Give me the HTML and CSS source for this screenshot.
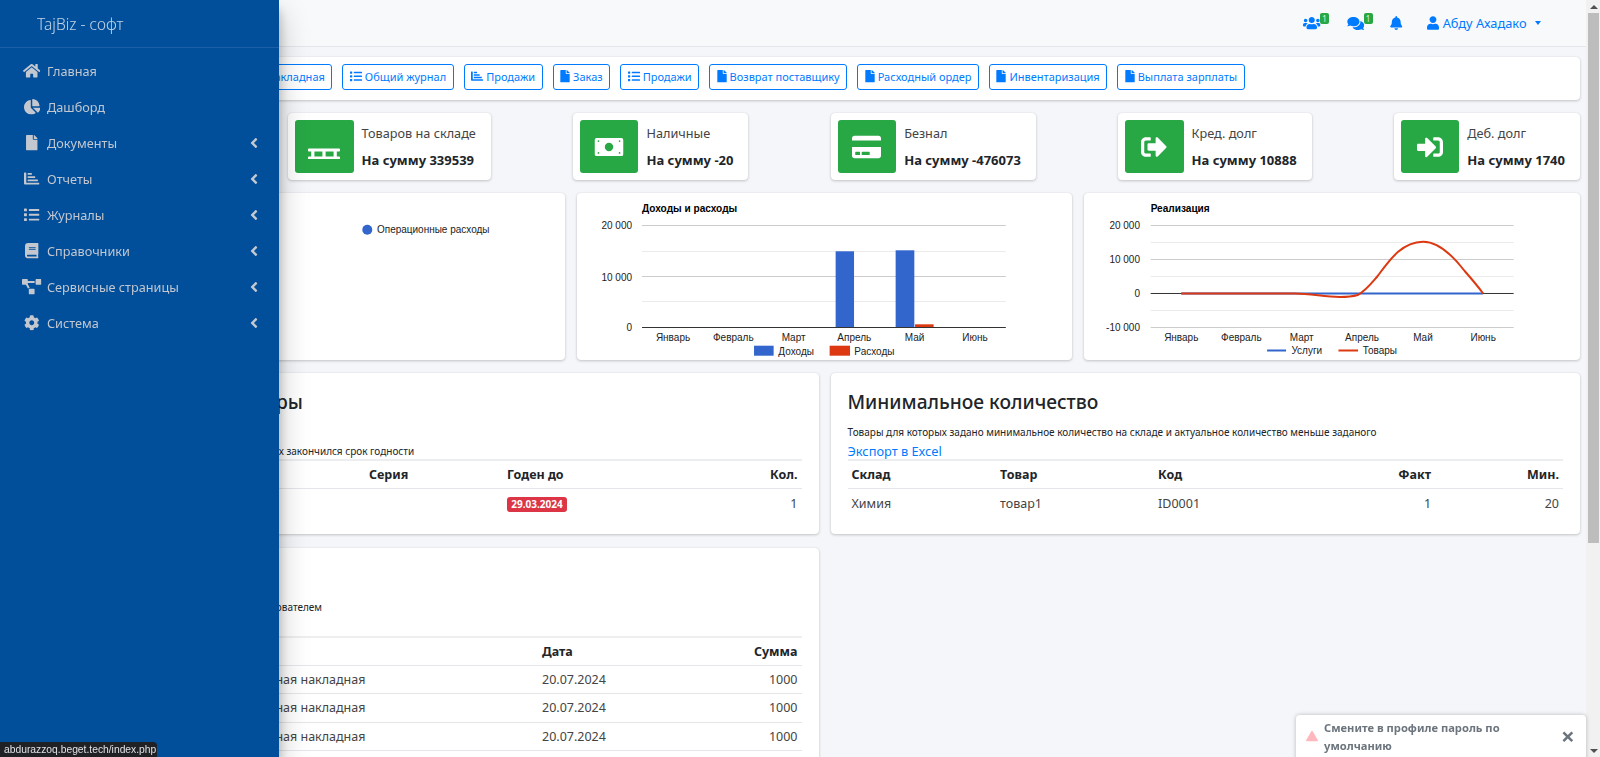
FILE: index.html
```html
<!DOCTYPE html>
<html lang="ru">
<head>
<meta charset="utf-8">
<title>TajBiz - софт</title>
<link rel="stylesheet" href="styles.css">
</head>
<body>
<svg class="sprite" xmlns="http://www.w3.org/2000/svg">
  <symbol id="i-home" viewBox="0 0 576 512"><path d="M280.37 148.26L96 300.11V464a16 16 0 0 0 16 16l112.06-.29a16 16 0 0 0 15.92-16V368a16 16 0 0 1 16-16h64a16 16 0 0 1 16 16v95.64a16 16 0 0 0 16 16.05L464 480a16 16 0 0 0 16-16V300L295.67 148.26a12.19 12.19 0 0 0-15.3 0zM571.6 251.47L488 182.56V44.05a12 12 0 0 0-12-12h-56a12 12 0 0 0-12 12v72.61L318.47 43a48 48 0 0 0-61 0L4.34 251.47a12 12 0 0 0-1.6 16.9l25.5 31A12 12 0 0 0 45.15 301l235.22-193.74a12.19 12.19 0 0 1 15.3 0L530.9 301a12 12 0 0 0 16.9-1.6l25.5-31a12 12 0 0 0-1.7-16.93z"/></symbol>
  <symbol id="i-pie" viewBox="0 0 544 512"><path d="M527.79 288H290.5l158.03 158.03c6.04 6.04 15.98 6.53 22.19.68 38.7-36.46 65.32-85.61 73.13-140.86 1.34-9.46-6.51-17.85-16.06-17.85zm-15.83-64.8C503.72 103.74 408.26 8.28 288.8.04 279.68-.59 272 7.1 272 16.24V240h223.77c9.14 0 16.82-7.68 16.19-16.8zM224 288V50.71c0-9.55-8.39-17.4-17.84-16.06C86.99 51.49-4.1 155.6.14 280.37 4.5 408.51 114.83 513.59 243.03 511.98c50.4-.63 96.97-16.87 135.26-44.03 7.9-5.6 8.42-17.23 1.57-24.08L224 288z"/></symbol>
  <symbol id="i-file" viewBox="0 0 384 512"><path d="M224 136V0H24C10.7 0 0 10.7 0 24v464c0 13.3 10.7 24 24 24h336c13.3 0 24-10.7 24-24V160H248c-13.2 0-24-10.8-24-24zm160-14.1v6.1H256V0h6.1c6.4 0 12.5 2.5 17 7l97.9 98c4.5 4.5 7 10.6 7 16.9z"/></symbol>
  <symbol id="i-chart" viewBox="0 0 512 512"><path d="M16 48h44a16 16 0 0 1 16 16v320h420a16 16 0 0 1 16 16v32a16 16 0 0 1-16 16H32a32 32 0 0 1-32-32V64a16 16 0 0 1 16-16z"/><rect x="120" y="64" width="140" height="60" rx="12"/><rect x="120" y="172" width="250" height="60" rx="12"/><rect x="120" y="280" width="340" height="60" rx="12"/></symbol>
  <symbol id="i-list" viewBox="0 0 512 512"><path d="M80 368H16a16 16 0 0 0-16 16v64a16 16 0 0 0 16 16h64a16 16 0 0 0 16-16v-64a16 16 0 0 0-16-16zm0-320H16A16 16 0 0 0 0 64v64a16 16 0 0 0 16 16h64a16 16 0 0 0 16-16V64a16 16 0 0 0-16-16zm0 160H16a16 16 0 0 0-16 16v64a16 16 0 0 0 16 16h64a16 16 0 0 0 16-16v-64a16 16 0 0 0-16-16zm416 176H176a16 16 0 0 0-16 16v32a16 16 0 0 0 16 16h320a16 16 0 0 0 16-16v-32a16 16 0 0 0-16-16zm0-320H176a16 16 0 0 0-16 16v32a16 16 0 0 0 16 16h320a16 16 0 0 0 16-16V80a16 16 0 0 0-16-16zm0 160H176a16 16 0 0 0-16 16v32a16 16 0 0 0 16 16h320a16 16 0 0 0 16-16v-32a16 16 0 0 0-16-16z"/></symbol>
  <symbol id="i-book" viewBox="0 0 448 512"><path d="M448 360V24c0-13.3-10.7-24-24-24H96C43 0 0 43 0 96v320c0 53 43 96 96 96h328c13.3 0 24-10.7 24-24v-16c0-7.5-3.5-14.3-8.9-18.7-4.2-15.4-4.2-59.3 0-74.7 5.4-4.3 8.9-11.1 8.9-18.6zM128 134c0-3.3 2.7-6 6-6h212c3.3 0 6 2.7 6 6v20c0 3.3-2.7 6-6 6H134c-3.3 0-6-2.7-6-6v-20zm0 64c0-3.3 2.7-6 6-6h212c3.3 0 6 2.7 6 6v20c0 3.3-2.7 6-6 6H134c-3.3 0-6-2.7-6-6v-20zm253.4 250H96c-17.7 0-32-14.3-32-32 0-17.6 14.4-32 32-32h285.4c-1.9 17.1-1.9 46.9 0 64z"/></symbol>
  <symbol id="i-diagram" viewBox="0 0 640 512"><path d="M384 320H256c-17.67 0-32 14.33-32 32v128c0 17.67 14.33 32 32 32h128c17.67 0 32-14.33 32-32V352c0-17.67-14.33-32-32-32zM192 32c0-17.67-14.33-32-32-32H32C14.33 0 0 14.33 0 32v128c0 17.67 14.33 32 32 32h95.72l73.16 128.04C211.98 300.98 232.4 288 256 288h.28L192 175.51V128h224V64H192V32zM608 0H480c-17.67 0-32 14.33-32 32v128c0 17.67 14.33 32 32 32h128c17.67 0 32-14.33 32-32V32c0-17.67-14.33-32-32-32z"/></symbol>
  <symbol id="i-cog" viewBox="0 0 512 512"><path d="M487.4 315.7l-42.6-24.6c4.3-23.2 4.3-47 0-70.2l42.6-24.6c4.9-2.8 7.1-8.6 5.5-14-11.1-35.6-30-67.8-54.7-94.6-3.8-4.1-10-5.1-14.8-2.3L380.8 110c-17.9-15.4-38.5-27.3-60.8-35.1V25.8c0-5.6-3.9-10.5-9.4-11.7-36.7-8.2-74.3-7.8-109.2 0-5.5 1.2-9.4 6.1-9.4 11.7V75c-22.2 7.9-42.8 19.8-60.8 35.1L88.7 85.5c-4.9-2.8-11-1.9-14.8 2.3-24.7 26.7-43.6 58.9-54.7 94.6-1.7 5.4.6 11.2 5.5 14L67.3 221c-4.3 23.2-4.3 47 0 70.2l-42.6 24.6c-4.9 2.8-7.1 8.6-5.5 14 11.1 35.6 30 67.8 54.7 94.6 3.8 4.1 10 5.1 14.8 2.3l42.6-24.6c17.9 15.4 38.5 27.3 60.8 35.1v49.2c0 5.6 3.9 10.5 9.4 11.7 36.7 8.2 74.3 7.8 109.2 0 5.5-1.2 9.4-6.1 9.4-11.7v-49.2c22.2-7.9 42.8-19.8 60.8-35.1l42.6 24.6c4.9 2.8 11 1.9 14.8-2.3 24.7-26.7 43.6-58.9 54.7-94.6 1.5-5.5-.7-11.3-5.6-14.1zM256 336c-44.1 0-80-35.9-80-80s35.9-80 80-80 80 35.9 80 80-35.9 80-80 80z"/></symbol>
  <symbol id="i-angle" viewBox="0 0 256 512"><path d="M31.7 239l136-136c9.4-9.4 24.6-9.4 33.9 0l22.6 22.6c9.4 9.4 9.4 24.6 0 33.9L127.9 256l96.4 96.4c9.4 9.4 9.4 24.6 0 33.9L201.7 409c-9.4 9.4-24.6 9.4-33.9 0l-136-136c-9.5-9.4-9.5-24.6-.1-34z"/></symbol>
  <symbol id="i-users" viewBox="0 0 640 512"><path d="M96 224c35.3 0 64-28.7 64-64s-28.7-64-64-64-64 28.7-64 64 28.7 64 64 64zm448 0c35.3 0 64-28.7 64-64s-28.7-64-64-64-64 28.7-64 64 28.7 64 64 64zm32 32h-64c-17.6 0-33.5 7.1-45.1 18.6 40.3 22.1 68.9 62 75.1 109.4h66c17.7 0 32-14.3 32-32v-32c0-35.3-28.7-64-64-64zm-256 0c61.9 0 112-50.1 112-112S381.9 32 320 32 208 82.1 208 144s50.1 112 112 112zm76.8 32h-8.3c-20.8 10-43.9 16-68.5 16s-47.6-6-68.5-16h-8.3C179.6 288 128 339.6 128 403.2V432c0 26.5 21.5 48 48 48h288c26.5 0 48-21.5 48-48v-28.8c0-63.6-51.6-115.2-115.2-115.2zm-223.7-13.4C161.5 263.1 145.6 256 128 256H64c-35.3 0-64 28.7-64 64v32c0 17.7 14.3 32 32 32h65.9c6.3-47.4 34.9-87.3 75.2-109.4z"/></symbol>
  <symbol id="i-comments" viewBox="0 0 576 512"><path d="M416 192c0-88.4-93.1-160-208-160S0 103.6 0 192c0 34.3 14.1 65.9 38 92-13.4 30.2-35.5 54.2-35.8 54.5-2.2 2.3-2.8 5.7-1.5 8.7S4.8 352 8 352c36.6 0 66.9-12.3 88.7-25 32.2 15.7 70.3 25 111.3 25 114.9 0 208-71.6 208-160zm122 220c23.9-26 38-57.7 38-92 0-66.9-53.5-124.2-129.3-148.1.9 6.6 1.3 13.3 1.3 20.1 0 105.9-107.7 192-240 192-10.8 0-21.3-.8-31.7-1.9C207.8 439.6 281.8 480 368 480c41 0 79.1-9.2 111.3-25 21.8 12.7 52.1 25 88.7 25 3.2 0 6.1-1.9 7.3-4.8 1.3-2.9.7-6.3-1.5-8.7-.3-.3-22.4-24.2-35.8-54.5z"/></symbol>
  <symbol id="i-bell" viewBox="0 0 448 512"><path d="M224 512c35.32 0 63.97-28.65 63.97-64H160.03c0 35.35 28.65 64 63.97 64zm215.39-149.71c-19.32-20.76-55.47-51.99-55.47-154.29 0-77.7-54.48-139.9-127.94-155.16V32c0-17.67-14.32-32-31.98-32s-31.98 14.33-31.98 32v20.84C118.56 68.1 64.08 130.3 64.08 208c0 102.3-36.15 133.53-55.47 154.29-6 6.45-8.66 14.16-8.61 21.71.11 16.4 12.98 32 32.1 32h383.8c19.12 0 32-15.6 32.1-32 .05-7.55-2.61-15.27-8.61-21.71z"/></symbol>
  <symbol id="i-user" viewBox="0 0 448 512"><path d="M224 256c70.7 0 128-57.3 128-128S294.7 0 224 0 96 57.3 96 128s57.3 128 128 128zm89.6 32h-16.7c-22.2 10.2-46.9 16-72.9 16s-50.6-5.8-72.9-16h-16.7C60.2 288 0 348.2 0 422.4V464c0 26.5 21.5 48 48 48h352c26.5 0 48-21.5 48-48v-41.6c0-74.2-60.2-134.4-134.4-134.4z"/></symbol>
  <symbol id="i-pallet" viewBox="0 0 640 512"><path d="M624 352c8.8 0 16-7.2 16-16v-32c0-8.8-7.2-16-16-16H16c-8.8 0-16 7.2-16 16v32c0 8.8 7.2 16 16 16h48v96H16c-8.8 0-16 7.2-16 16v32c0 8.8 7.2 16 16 16h608c8.8 0 16-7.2 16-16v-32c0-8.8-7.2-16-16-16h-48v-96h48zM288 448H128v-96h160v96zm224 0H352v-96h160v96z"/></symbol>
  <symbol id="i-money" viewBox="0 0 640 512"><path fill-rule="evenodd" d="M56 64h528a40 40 0 0 1 40 40v304a40 40 0 0 1-40 40H56a40 40 0 0 1-40-40V104a40 40 0 0 1 40-40zM320 166a90 90 0 1 0 0 180 90 90 0 1 0 0-180zM95 112a18 18 0 1 0 0 36 18 18 0 1 0 0-36zM545 112a18 18 0 1 0 0 36 18 18 0 1 0 0-36zM95 364a18 18 0 1 0 0 36 18 18 0 1 0 0-36zM545 364a18 18 0 1 0 0 36 18 18 0 1 0 0-36z"/></symbol>
  <symbol id="i-card" viewBox="0 0 576 512"><path d="M0 432c0 26.5 21.5 48 48 48h480c26.5 0 48-21.5 48-48V256H0v176zm192-68c0-6.6 5.4-12 12-12h136c6.6 0 12 5.4 12 12v40c0 6.6-5.4 12-12 12H204c-6.6 0-12-5.4-12-12v-40zm-128 0c0-6.6 5.4-12 12-12h72c6.6 0 12 5.4 12 12v40c0 6.6-5.4 12-12 12H76c-6.6 0-12-5.4-12-12v-40zM576 80v48H0V80c0-26.5 21.5-48 48-48h480c26.5 0 48 21.5 48 48z"/></symbol>
  <symbol id="i-out" viewBox="0 0 512 512"><path d="M497 273L329 441c-15 15-41 4.5-41-17v-96H152c-13.3 0-24-10.7-24-24v-96c0-13.3 10.7-24 24-24h136V88c0-21.4 25.9-32 41-17l168 168c9.3 9.4 9.3 24.6 0 34zM192 436v-40c0-6.6-5.4-12-12-12H96c-17.7 0-32-14.3-32-32V160c0-17.7 14.3-32 32-32h84c6.6 0 12-5.4 12-12V76c0-6.6-5.4-12-12-12H96c-53 0-96 43-96 96v192c0 53 43 96 96 96h84c6.6 0 12-5.4 12-12z"/></symbol>
  <symbol id="i-in" viewBox="0 0 512 512"><path d="M416 448h-84c-6.6 0-12-5.4-12-12v-40c0-6.6 5.4-12 12-12h84c17.7 0 32-14.3 32-32V160c0-17.7-14.3-32-32-32h-84c-6.6 0-12-5.4-12-12V76c0-6.6 5.4-12 12-12h84c53 0 96 43 96 96v192c0 53-43 96-96 96zm-47-201L201 79c-15-15-41-4.5-41 17v96H24c-13.3 0-24 10.7-24 24v96c0 13.3 10.7 24 24 24h136v96c0 21.5 26 32 41 17l168-168c9.3-9.4 9.3-24.6 0-34z"/></symbol>
  <symbol id="i-warn" viewBox="0 0 576 512"><path d="M569.517 440.013C587.975 472.007 564.806 512 527.94 512H48.054c-36.937 0-59.999-40.055-41.577-71.987L246.423 23.985c18.467-32.009 64.72-31.951 83.154 0z"/></symbol>
</svg>

<aside class="sidebar">
  <div class="brand">TajBiz - софт</div>
  <nav class="side-nav">
    <a class="side-item"><span class="side-icon"><svg class="ico w-home"><use href="#i-home"/></svg></span>Главная</a>
    <a class="side-item"><span class="side-icon"><svg class="ico w-pie"><use href="#i-pie"/></svg></span>Дашборд</a>
    <a class="side-item"><span class="side-icon"><svg class="ico w-file"><use href="#i-file"/></svg></span>Документы<svg class="ico side-arrow"><use href="#i-angle"/></svg></a>
    <a class="side-item"><span class="side-icon"><svg class="ico w-list"><use href="#i-chart"/></svg></span>Отчеты<svg class="ico side-arrow"><use href="#i-angle"/></svg></a>
    <a class="side-item"><span class="side-icon"><svg class="ico w-list"><use href="#i-list"/></svg></span>Журналы<svg class="ico side-arrow"><use href="#i-angle"/></svg></a>
    <a class="side-item"><span class="side-icon"><svg class="ico w-book"><use href="#i-book"/></svg></span>Справочники<svg class="ico side-arrow"><use href="#i-angle"/></svg></a>
    <a class="side-item"><span class="side-icon"><svg class="ico w-diagram"><use href="#i-diagram"/></svg></span>Сервисные страницы<svg class="ico side-arrow"><use href="#i-angle"/></svg></a>
    <a class="side-item"><span class="side-icon"><svg class="ico w-list"><use href="#i-cog"/></svg></span>Система<svg class="ico side-arrow"><use href="#i-angle"/></svg></a>
  </nav>
</aside>

<div class="page">
  <header class="navbar">
    <a class="nav-link nav-users"><svg class="ico"><use href="#i-users"/></svg><span class="nav-badge">1</span></a>
    <a class="nav-link nav-comments"><svg class="ico"><use href="#i-comments"/></svg><span class="nav-badge">1</span></a>
    <a class="nav-link nav-bell"><svg class="ico"><use href="#i-bell"/></svg></a>
    <a class="nav-link nav-user"><svg class="ico"><use href="#i-user"/></svg><span>Абду Ахадако</span><span class="caret"></span></a>
  </header>

  <main class="content">
    <section class="card actions">
      <a class="btn"><svg class="ico btn-ico"><use href="#i-file"/></svg>Приходная накладная</a>
      <a class="btn"><svg class="ico btn-ico wide"><use href="#i-list"/></svg>Общий журнал</a>
      <a class="btn"><svg class="ico btn-ico wide"><use href="#i-chart"/></svg>Продажи</a>
      <a class="btn"><svg class="ico btn-ico"><use href="#i-file"/></svg>Заказ</a>
      <a class="btn"><svg class="ico btn-ico wide"><use href="#i-list"/></svg>Продажи</a>
      <a class="btn"><svg class="ico btn-ico"><use href="#i-file"/></svg>Возврат поставщику</a>
      <a class="btn"><svg class="ico btn-ico"><use href="#i-file"/></svg>Расходный ордер</a>
      <a class="btn"><svg class="ico btn-ico"><use href="#i-file"/></svg>Инвентаризация</a>
      <a class="btn"><svg class="ico btn-ico"><use href="#i-file"/></svg>Выплата зарплаты</a>
    </section>

    <section class="info-row">
      <div class="card info"><span class="info-icon"><svg class="ico pallet"><use href="#i-pallet"/></svg></span><div class="info-text"><span class="info-label">Товаров на складе</span><span class="info-value">На сумму 339539</span></div></div>
      <div class="card info"><span class="info-icon"><svg class="ico money"><use href="#i-money"/></svg></span><div class="info-text"><span class="info-label">Наличные</span><span class="info-value">На сумму -20</span></div></div>
      <div class="card info"><span class="info-icon"><svg class="ico big"><use href="#i-card"/></svg></span><div class="info-text"><span class="info-label">Безнал</span><span class="info-value">На сумму -476073</span></div></div>
      <div class="card info"><span class="info-icon"><svg class="ico mid"><use href="#i-out"/></svg></span><div class="info-text"><span class="info-label">Кред. долг</span><span class="info-value">На сумму 10888</span></div></div>
      <div class="card info"><span class="info-icon"><svg class="ico mid"><use href="#i-in"/></svg></span><div class="info-text"><span class="info-label">Деб. долг</span><span class="info-value">На сумму 1740</span></div></div>
    </section>

    <section class="charts">
      <div class="card chart">
        <svg class="chart-svg" viewBox="69 193 495.67 167" preserveAspectRatio="xMinYMin">
          <circle cx="367.3" cy="229.7" r="5" fill="#3366cc"/>
          <text class="ct" x="377" y="233.3">Операционные расходы</text>
        </svg>
      </div>
      <div class="card chart">
        <svg class="chart-svg" viewBox="576.67 193 495.67 167" preserveAspectRatio="xMinYMin">
          <text class="ct-title" x="641.7" y="212">Доходы и расходы</text>
          <g class="grid-major"><line x1="641.7" x2="1005.5" y1="225.5" y2="225.5"/><line x1="641.7" x2="1005.5" y1="276.5" y2="276.5"/></g>
          <g class="grid-minor"><line x1="641.7" x2="1005.5" y1="251.5" y2="251.5"/><line x1="641.7" x2="1005.5" y1="301.5" y2="301.5"/></g>
          <rect x="835.3" y="251.3" width="18.4" height="76" fill="#3366cc"/>
          <rect x="895.3" y="250.3" width="18.7" height="77" fill="#3366cc"/>
          <rect x="914.7" y="324.3" width="18.6" height="3" fill="#dc3912"/>
          <line class="axis" x1="641.7" x2="1005.5" y1="327.5" y2="327.5"/>
          <g class="ct ct-end"><text x="631.7" y="229">20 000</text><text x="631.7" y="280.5">10 000</text><text x="631.7" y="331">0</text></g>
          <g class="ct ct-mid"><text x="672.7" y="341">Январь</text><text x="733" y="341">Февраль</text><text x="793.3" y="341">Март</text><text x="854" y="341">Апрель</text><text x="914.3" y="341">Май</text><text x="974.7" y="341">Июнь</text></g>
          <rect x="753.7" y="345.7" width="19.6" height="10" fill="#3366cc"/>
          <text class="ct" x="778" y="354.5">Доходы</text>
          <rect x="829.3" y="345.7" width="20.4" height="10" fill="#dc3912"/>
          <text class="ct" x="854" y="354.5">Расходы</text>
        </svg>
      </div>
      <div class="card chart">
        <svg class="chart-svg" viewBox="1084.33 193 495.67 167" preserveAspectRatio="xMinYMin">
          <text class="ct-title" x="1151" y="212">Реализация</text>
          <g class="grid-major"><line x1="1151" x2="1514" y1="225.5" y2="225.5"/><line x1="1151" x2="1514" y1="259.5" y2="259.5"/><line x1="1151" x2="1514" y1="327.5" y2="327.5"/></g>
          <g class="grid-minor"><line x1="1151" x2="1514" y1="242.5" y2="242.5"/><line x1="1151" x2="1514" y1="276.5" y2="276.5"/><line x1="1151" x2="1514" y1="310.5" y2="310.5"/></g>
          <line class="axis" x1="1151" x2="1514" y1="293.5" y2="293.5"/>
          <g class="ct ct-end"><text x="1140.3" y="229">20 000</text><text x="1140.3" y="263">10 000</text><text x="1140.3" y="297">0</text><text x="1140.3" y="331">-10 000</text></g>
          <g class="ct ct-mid"><text x="1181.6" y="341">Январь</text><text x="1241.7" y="341">Февраль</text><text x="1302" y="341">Март</text><text x="1362.4" y="341">Апрель</text><text x="1423.3" y="341">Май</text><text x="1483.5" y="341">Июнь</text></g>
          <path class="line-blue" d="M1181.6 293.5H1483.5"/>
          <path class="line-red" d="M1181.6 293.5L1295 293.5C1312 293.7 1325 297 1340 297C1347 297 1353 296.5 1358 295C1366 291 1372 283 1378 276C1390 260 1402 242 1423.3 241.7C1440 241.5 1455 258 1465 271C1472 279 1478 286 1483.5 293.5"/>
          <path class="line-blue" d="M1267.4 350.5H1286.4"/>
          <text class="ct" x="1291.8" y="354.5">Услуги</text>
          <path class="line-red" d="M1338.8 350.5H1358.4"/>
          <text class="ct" x="1363" y="354.5">Товары</text>
        </svg>
      </div>
    </section>

    <section class="tables">
      <div class="table-col">
        <div class="card tcard">
          <h2 class="tcard-title">Просроченные товары</h2>
          <div class="tline"></div>
          <div class="tline tline-exp">Список просроченных товаров, у которых закончился срок годности</div>
          <table class="tbl">
            <thead><tr><th class="c-exp1">Товар</th><th class="c-exp2">Серия</th><th class="c-exp3">Годен до</th><th class="num">Кол.</th></tr></thead>
            <tbody><tr><td>товар1</td><td></td><td><span class="badge">29.03.2024</span></td><td class="num">1</td></tr></tbody>
          </table>
        </div>
        <div class="card tcard tcard-long">
          <h2 class="tcard-title">Документы</h2>
          <div class="tline">Документы, созданные текущим пользователем</div>
          <div class="tline"></div>
          <table class="tbl">
            <thead><tr><th class="c-doc1">Автор</th><th class="c-doc2">Тип</th><th class="c-doc3">Дата</th><th class="num">Сумма</th></tr></thead>
            <tbody>
              <tr><td>Абду</td><td>Расходная накладная</td><td>20.07.2024</td><td class="num">1000</td></tr>
              <tr><td>Абду</td><td>Расходная накладная</td><td>20.07.2024</td><td class="num">1000</td></tr>
              <tr><td>Абду</td><td>Расходная накладная</td><td>20.07.2024</td><td class="num">1000</td></tr>
            </tbody>
          </table>
        </div>
      </div>
      <div class="table-col">
        <div class="card tcard">
          <h2 class="tcard-title">Минимальное количество</h2>
          <div class="tline">Товары для которых задано минимальное количество на складе и актуальное количество меньше заданого</div>
          <a class="tline tlink">Экспорт в Excel</a>
          <table class="tbl">
            <thead><tr><th class="c-min1">Склад</th><th class="c-min2">Товар</th><th class="c-min3">Код</th><th class="num c-min4">Факт</th><th class="num">Мин.</th></tr></thead>
            <tbody><tr><td>Химия</td><td>товар1</td><td>ID0001</td><td class="num">1</td><td class="num">20</td></tr></tbody>
          </table>
        </div>
      </div>
    </section>
  </main>
</div>

<div class="scrollbar">
  <span class="sb-btn"><span class="sb-up"></span></span>
  <span class="sb-thumb"></span>
  <span class="sb-space"></span>
  <span class="sb-btn"><span class="sb-down"></span></span>
</div>

<div class="toast">
  <svg class="ico toast-icon"><use href="#i-warn"/></svg>
  <span class="toast-text">Смените в профиле пароль по умолчанию</span>
  <span class="toast-close">×</span>
</div>
<div class="status">abdurazzoq.beget.tech/index.php</div>
</body>
</html>
```
FILE: styles.css
```css
* { box-sizing: border-box; }
html, body { margin: 0; height: 100%; overflow: hidden; }
body { display: flex; font-family: "Noto Sans", "Open Sans", sans-serif; font-size: 13px; color: #212529; background: #f4f6f9; }
a { text-decoration: none; color: inherit; }
.sprite { display: none; }
.ico { fill: currentColor; display: block; height: 1em; width: 1em; flex: none; }

.sidebar { position: fixed; left: 0; top: 0; bottom: 0; width: 279px; background: #014e9a; color: #c2c7d0; z-index: 5; box-shadow: 0 14px 28px rgba(0,0,0,.25), 0 10px 10px rgba(0,0,0,.22); }
.brand { height: 48px; padding: 12px 0 0 37px; font-size: 15.5px; font-weight: 300; line-height: 24px; color: rgba(255,255,255,.75); border-bottom: 1px solid #1c5fa6; }
.side-nav { padding-top: 5px; display: flex; flex-direction: column; }
.side-item { height: 36px; display: flex; align-items: center; font-size: 12.7px; position: relative; padding-left: 23px; }
.side-icon { width: 24px; display: flex; justify-content: center; font-size: 15.5px; }
.side-icon .ico { margin-right: 6px; }
.w-home { width: 17.4px; } .w-pie { width: 16.5px; } .w-file { width: 11.7px; } .w-list { width: 15.5px; } .w-book { width: 13.6px; } .w-diagram { width: 19.4px; }
.side-arrow { position: absolute; left: 250px; top: 10px; width: 8px; height: 16px; }

.page { width: 1586px; flex: none; height: 100vh; overflow: hidden; background: #f4f6f9; }
.scrollbar { flex: 1; height: 100vh; background: #f1f1f1; display: flex; flex-direction: column; padding: 0 1px 0 2px; }
.sb-btn { height: 13px; display: flex; align-items: center; justify-content: center; flex: none; }
.sb-up { border-left: 4px solid transparent; border-right: 4px solid transparent; border-bottom: 4px solid #505050; }
.sb-down { border-left: 4px solid transparent; border-right: 4px solid transparent; border-top: 4px solid #505050; }
.sb-thumb { height: 530px; background: #bdbdbd; flex: none; }
.sb-space { flex: 1; }

.navbar { height: 47px; background: #f8f9fa; border-bottom: 1px solid #e4e6e9; display: flex; align-items: center; justify-content: flex-end; padding-right: 45px; color: #007bff; }
.nav-link { position: relative; display: flex; align-items: center; font-size: 14px; color: #007bff; }
.nav-users .ico { width: 17.5px; height: 14px; }
.nav-comments { margin-left: 26px; } .nav-comments .ico { width: 17.5px; height: 15px; }
.nav-bell { margin-left: 26px; } .nav-bell .ico { width: 12.5px; height: 14px; }
.nav-user { margin-left: 24px; gap: 4px; font-size: 12.8px; } .nav-user .ico { width: 12px; height: 14px; }
.nav-badge { position: absolute; left: 17px; top: -3px; width: 9px; height: 11px; background: #28a745; color: #dff5e4; font-size: 8px; line-height: 11px; text-align: center; border-radius: 2px; }
.caret { width: 0; height: 0; border-left: 3.5px solid transparent; border-right: 3.5px solid transparent; border-top: 4px solid currentColor; margin-left: 4.5px; }

.content { padding: 10px 6px 20px 69px; display: flex; flex-direction: column; gap: 13px; }
.card { background: #fff; border-radius: 4px; box-shadow: 0 0 1px rgba(0,0,0,.125), 0 1px 3px rgba(0,0,0,.2); }
.actions { height: 43px; display: flex; gap: 10px; padding: 6.5px 0 0 116px; }
.btn { height: 26px; display: flex; align-items: center; gap: 3px; padding: 0 6.5px; border: 1px solid #007bff; border-radius: 3px; color: #007bff; font-size: 11px; white-space: nowrap; }
.btn-ico { width: 10px; height: 12.5px; }
.btn-ico.wide { width: 12px; }

.info-row { display: flex; justify-content: space-between; padding-left: 219px; }
.info { height: 67px; padding: 7px; display: flex; align-items: stretch; }
.info-icon { width: 58.5px; height: 53px; background: #28a745; border-radius: 3px; color: #fff; display: flex; align-items: center; justify-content: center; }
.ico.pallet { width: 32px; height: 25.6px; }
.ico.money { width: 30px; height: 24px; }
.ico.big { width: 29px; height: 26px; }
.ico.mid { width: 26px; height: 26px; }
.info-text { padding-left: 8px; padding-right: 8px; display: flex; flex-direction: column; }
.info-label { font-size: 12.7px; line-height: 18px; margin-top: 4px; color: #444; white-space: nowrap; }
.info-value { font-size: 13px; font-weight: 700; line-height: 18px; margin-top: 9px; white-space: nowrap; }

.charts { display: grid; grid-template-columns: repeat(3, 1fr); gap: 12px; }
.chart { height: 167px; overflow: hidden; }
.chart-svg { display: block; width: 100%; height: 100%; }
.ct { font-family: "Liberation Sans", Arial, sans-serif; font-size: 10px; fill: #222; }
.ct-end { text-anchor: end; } .ct-mid { text-anchor: middle; }
.ct-title { font-family: "Liberation Sans", Arial, sans-serif; font-size: 10.1px; font-weight: 700; fill: #000; }
.grid-major line { stroke: #ccc; stroke-width: 1; }
.grid-minor line { stroke: #ebebeb; stroke-width: 1; }
.axis { stroke: #333; stroke-width: 1; }
.line-blue { stroke: #3366cc; stroke-width: 2; fill: none; }
.line-red { stroke: #dc3912; stroke-width: 2; fill: none; }

.tables { display: grid; grid-template-columns: repeat(2, 1fr); gap: 12px; align-items: start; }
.table-col { display: flex; flex-direction: column; gap: 14px; }
.tcard { padding: 13px 17px 17px; }
.tcard-long { min-height: 300px; padding-top: 14.5px; }
.tcard-title { margin: 0 0 4px; height: 32px; font-size: 19.2px; font-weight: 500; line-height: 32px; }
.tcard-long .tcard-title { margin-bottom: 2.5px; }
.tline { display: block; height: 18.5px; font-size: 10px; line-height: 20px; white-space: nowrap; }
.tcard-long .tline:empty { height: 20px; }
.tline-exp { margin-left: -6px; }
.tlink { font-size: 12.8px; color: #007bff; }
.tbl { width: 100%; table-layout: fixed; border-collapse: collapse; font-size: 12.5px; }
.tbl th { height: 28.5px; padding: 0 4px; text-align: left; font-weight: 700; border-top: 2px solid #eceeef; border-bottom: 1px solid #e4e6e9; }
.tbl td { height: 28.6px; padding: 0 4px; color: #444; border-bottom: 1px solid #e4e6e9; white-space: nowrap; }
.tbl tr:only-child td { border-bottom: none; }
.tbl .num { text-align: right; }
.c-exp1 { width: 279px; } .c-exp2 { width: 138px; } .c-exp3 { width: 160px; }
.c-doc1 { width: 144px; } .c-doc2 { width: 308px; } .c-doc3 { width: 140px; }
.c-min1 { width: 148.6px; } .c-min2 { width: 158px; } .c-min3 { width: 146px; } .c-min4 { width: 135px; }
.badge { display: inline-block; width: 60px; height: 15px; line-height: 15px; text-align: center; background: #dc3545; color: #fff; font-size: 10px; font-weight: 700; border-radius: 3px; vertical-align: middle; }

.toast { position: fixed; left: 1296px; top: 715px; width: 290px; height: 60px; background: #fff; border-radius: 4px 4px 0 0; box-shadow: 0 0 4px rgba(0,0,0,.25); display: flex; align-items: flex-start; padding: 4px 0 0 10px; z-index: 6; }
.toast-icon { width: 12px; height: 10.5px; color: #ffb8bd; margin-top: 12px; flex: none; }
.toast-text { margin-left: 6px; width: 215px; font-size: 11.2px; font-weight: 700; line-height: 18px; color: #6c757d; }
.toast-close { margin-left: 22px; font-size: 24px; line-height: 34px; color: #6c757d; font-weight: 700; }
.status { position: fixed; left: 0; bottom: 0; height: 15px; width: 157px; padding-left: 4px; background: #202124; color: #dfe1e5; font-family: "Liberation Sans", sans-serif; font-size: 10.3px; line-height: 15px; border-top-right-radius: 4px; z-index: 7; white-space: nowrap; overflow: hidden; }
```
